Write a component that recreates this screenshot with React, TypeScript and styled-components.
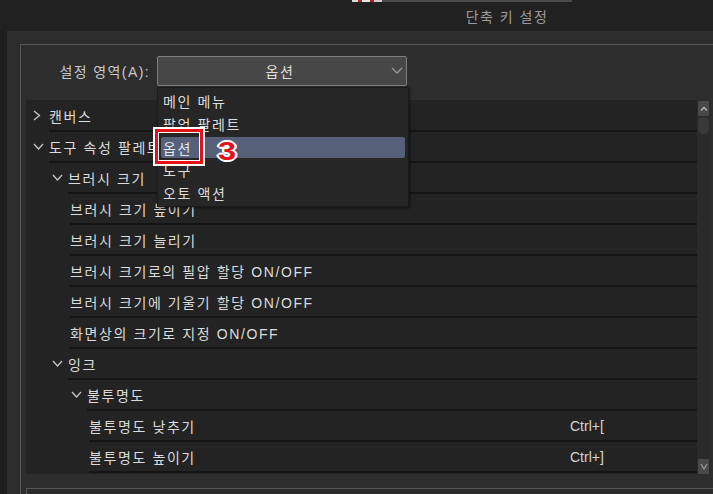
import React from 'react';
import styled, { createGlobalStyle } from 'styled-components';

const GlobalStyle = createGlobalStyle`
  html, body {
    margin: 0;
    padding: 0;
    background: #2d2d2d;
  }
  body {
    font-family: "Liberation Sans", "Noto Sans CJK KR", sans-serif;
    font-size: 14px;
    color: #d6d6d6;
  }
`;

const Window = styled.div`
  position: relative;
  display: flex;
  flex-direction: column;
  width: 713px;
  height: 494px;
  overflow: hidden;
  background: #2d2d2d;
`;

const TitleBar = styled.div`
  display: flex;
  align-items: center;
  justify-content: center;
  box-sizing: border-box;
  height: 31px;
  padding-left: 301px;
  background: #212121;
  color: #9c9c9c;
  letter-spacing: 1.5px;
`;

// remains of a cropped annotation above the window edge
const CropEdge = styled.div`
  position: absolute;
  top: 0;
  left: 352px;
  display: flex;
  height: 2px;
`;

const CropMark = styled.span<{ $w: number; $c: string }>`
  width: ${(p) => p.$w}px;
  height: 100%;
  background: ${(p) => p.$c};
`;

const Body = styled.div`
  display: flex;
  flex: 1;
`;

const LeftStrip = styled.div`
  width: 7px;
  background: #1d1d1d;
`;

const Content = styled.div`
  display: flex;
  flex-direction: column;
  flex: 1;
  padding-top: 13px;
`;

const GroupBox = styled.div`
  display: flex;
  flex-direction: column;
  flex: 1;
  margin-left: 13px;
  padding-top: 11px;
  border-top: 1px solid #565656;
  border-left: 1px solid #565656;
`;

const FieldRow = styled.div`
  display: flex;
  align-items: center;
  height: 30px;
`;

const FieldLabel = styled.label`
  width: 129px;
  margin-right: 7px;
  text-align: right;
  color: #c9c9c9;
  letter-spacing: 1.4px;
`;

const SelectWrap = styled.div`
  position: relative;
  width: 250px;
  height: 30px;
`;

const SelectBox = styled.div`
  display: flex;
  align-items: center;
  justify-content: center;
  box-sizing: border-box;
  height: 100%;
  padding-right: 4px;
  border: 1px solid #7f7f7f;
  border-radius: 2px;
  background: #474747;
  color: #dedede;
  letter-spacing: 1.5px;
`;

const SelectArrow = styled.svg`
  position: absolute;
  right: 4px;
  top: 11px;
`;

const Popup = styled.ul`
  position: absolute;
  top: calc(100% + 1px);
  left: 0;
  z-index: 5;
  box-sizing: border-box;
  width: 252px;
  margin: 0;
  padding: 1px 0 2px;
  list-style: none;
  background: #262626;
  border: 1px solid #1b1b1b;
  box-shadow: 1px 1px 2px rgba(0, 0, 0, 0.5);
`;

const PopupItem = styled.li<{ $active?: boolean }>`
  display: flex;
  align-items: center;
  height: ${(p) => (p.$active ? 21 : 23)}px;
  margin: ${(p) => (p.$active ? '2px 3px 0 3px' : '0')};
  padding-left: ${(p) => (p.$active ? 2 : 5)}px;
  border-radius: 2px;
  background: ${(p) => (p.$active ? '#566079' : 'transparent')};
  color: ${(p) => (p.$active ? '#e6e8ee' : '#dcdcdc')};
  letter-spacing: 1.6px;
`;

const TreePanel = styled.div`
  display: flex;
  height: 374px;
  margin: 14px 3px 0 5px;
`;

const TreeList = styled.div`
  flex: 1;
  padding-top: 1px;
  background: #232323;
  overflow: hidden;
`;

const Row = styled.div<{ $indent: number }>`
  display: flex;
  box-sizing: border-box;
  height: 31px;
  padding-left: ${(p) => p.$indent}px;
`;

const Toggle = styled.span`
  display: flex;
  align-items: center;
  width: 16px;
  padding-left: 1px;
  margin-bottom: 2px;
`;

const RowLabel = styled.div`
  display: flex;
  align-items: center;
  flex: 1;
  border-bottom: 2px solid #141414;
  color: #dcdcdc;
  letter-spacing: 1.6px;
`;

const RowName = styled.span`
  flex: 1;
`;

const Shortcut = styled.span`
  width: 127px;
  letter-spacing: 0;
  color: #d4d4d4;
`;

const ScrollBar = styled.div`
  display: flex;
  flex-direction: column;
  width: 13px;
  padding: 1px 1px 0;
  box-sizing: border-box;
  background: #2a2a2a;
`;

const ScrollButton = styled.div`
  display: flex;
  align-items: center;
  justify-content: center;
  height: 15px;
  background: #494949;
`;

const ScrollTrack = styled.div`
  flex: 1;
  padding-top: 1px;
`;

const ScrollThumb = styled.div`
  height: 17px;
  border-radius: 5px;
  background: #393939;
`;

const BottomBox = styled.div`
  flex: 1;
  margin: 14px 0 0 5px;
  border-top: 1px solid #565656;
  border-left: 1px solid #565656;
  background: #2b2b2b;
`;

const Marker = styled.div`
  position: absolute;
  left: 153px;
  top: 127px;
  z-index: 10;
  box-sizing: border-box;
  width: 52px;
  height: 39px;
  border: 2px solid #ffffff;
  box-shadow: inset 0 0 0 3px #e3121b, inset 0 0 0 4px #ffffff;
`;

const MarkerNumber = styled.span`
  position: absolute;
  left: 218px;
  top: 139px;
  z-index: 10;
  font-family: "Liberation Sans", sans-serif;
  font-weight: bold;
  font-size: 25px;
  line-height: 1;
  color: #e3121b;
  transform: scaleX(1.3);
  transform-origin: left top;
  text-shadow: -2px 0 #fff, 2px 0 #fff, 0 -2px #fff, 0 2px #fff, -1px -1px #fff, 1px 1px #fff,
    -1px 1px #fff, 1px -1px #fff;
`;

const ChevronRight = () => (
  <svg width="8" height="11" viewBox="0 0 8 11">
    <polyline points="1,1 6.5,5.5 1,10" fill="none" stroke="#c6c6c6" strokeWidth="1.3" />
  </svg>
);

const ChevronDown = ({ color = '#c6c6c6', w = 11 }: { color?: string; w?: number }) => (
  <svg width={w} height="7" viewBox={`0 0 ${w} 7`}>
    <polyline points={`1,1 ${w / 2},6 ${w - 1},1`} fill="none" stroke={color} strokeWidth="1.3" />
  </svg>
);

const ChevronUp = ({ color = '#b8b8b8' }: { color?: string }) => (
  <svg width="8" height="5" viewBox="0 0 8 5">
    <polyline points="1,4.5 4,1.5 7,4.5" fill="none" stroke={color} strokeWidth="1.3" />
  </svg>
);

type TreeRow = {
  level: number;
  label: string;
  toggle?: 'open' | 'closed';
  shortcut?: string;
};

const rows: TreeRow[] = [
  { level: 0, label: '캔버스', toggle: 'closed' },
  { level: 0, label: '도구 속성 팔레트', toggle: 'open' },
  { level: 1, label: '브러시 크기', toggle: 'open' },
  { level: 2, label: '브러시 크기 높이기' },
  { level: 2, label: '브러시 크기 늘리기' },
  { level: 2, label: '브러시 크기로의 필압 할당 ON/OFF' },
  { level: 2, label: '브러시 크기에 기울기 할당 ON/OFF' },
  { level: 2, label: '화면상의 크기로 지정 ON/OFF' },
  { level: 1, label: '잉크', toggle: 'open' },
  { level: 2, label: '불투명도', toggle: 'open' },
  { level: 3, label: '불투명도 낮추기', shortcut: 'Ctrl+[' },
  { level: 3, label: '불투명도 높이기', shortcut: 'Ctrl+]' },
];

const areas = ['메인 메뉴', '팝업 팔레트', '옵션', '도구', '오토 액션'];

const App: React.FC = () => {
  return (
    <>
      <GlobalStyle />
      <Window>
        <CropEdge>
          <CropMark $w={6} $c="#d8d8d8" />
          <CropMark $w={4} $c="#b3262b" />
          <CropMark $w={8} $c="#e8e8e8" />
          <CropMark $w={4} $c="#b3262b" />
          <CropMark $w={8} $c="#d0d0d0" />
          <CropMark $w={190} $c="#4a4a4a" />
        </CropEdge>
        <TitleBar>단축 키 설정</TitleBar>
        <Body>
          <LeftStrip />
          <Content>
            <GroupBox>
              <FieldRow>
                <FieldLabel>설정 영역(A):</FieldLabel>
                <SelectWrap>
                  <SelectBox>옵션</SelectBox>
                  <SelectArrow width="12" height="7" viewBox="0 0 12 7">
                    <polyline points="1,1 6,6 11,1" fill="none" stroke="#9a9a9a" strokeWidth="1.3" />
                  </SelectArrow>
                  <Popup>
                    {areas.map((a) => (
                      <PopupItem key={a} $active={a === '옵션'}>
                        {a}
                      </PopupItem>
                    ))}
                  </Popup>
                </SelectWrap>
              </FieldRow>
              <TreePanel>
                <TreeList>
                  {rows.map((r, i) => (
                    <Row key={i} $indent={6 + r.level * 19}>
                      {r.toggle && (
                        <Toggle>{r.toggle === 'open' ? <ChevronDown /> : <ChevronRight />}</Toggle>
                      )}
                      <RowLabel>
                        <RowName>{r.label}</RowName>
                        {r.shortcut && <Shortcut>{r.shortcut}</Shortcut>}
                      </RowLabel>
                    </Row>
                  ))}
                </TreeList>
                <ScrollBar>
                  <ScrollButton>
                    <ChevronUp />
                  </ScrollButton>
                  <ScrollTrack>
                    <ScrollThumb />
                  </ScrollTrack>
                  <ScrollButton>
                    <ChevronDown color="#9a9a9a" w={8} />
                  </ScrollButton>
                </ScrollBar>
              </TreePanel>
              <BottomBox />
            </GroupBox>
          </Content>
        </Body>
        <Marker />
        <MarkerNumber>3</MarkerNumber>
      </Window>
    </>
  );
};

export default App;
